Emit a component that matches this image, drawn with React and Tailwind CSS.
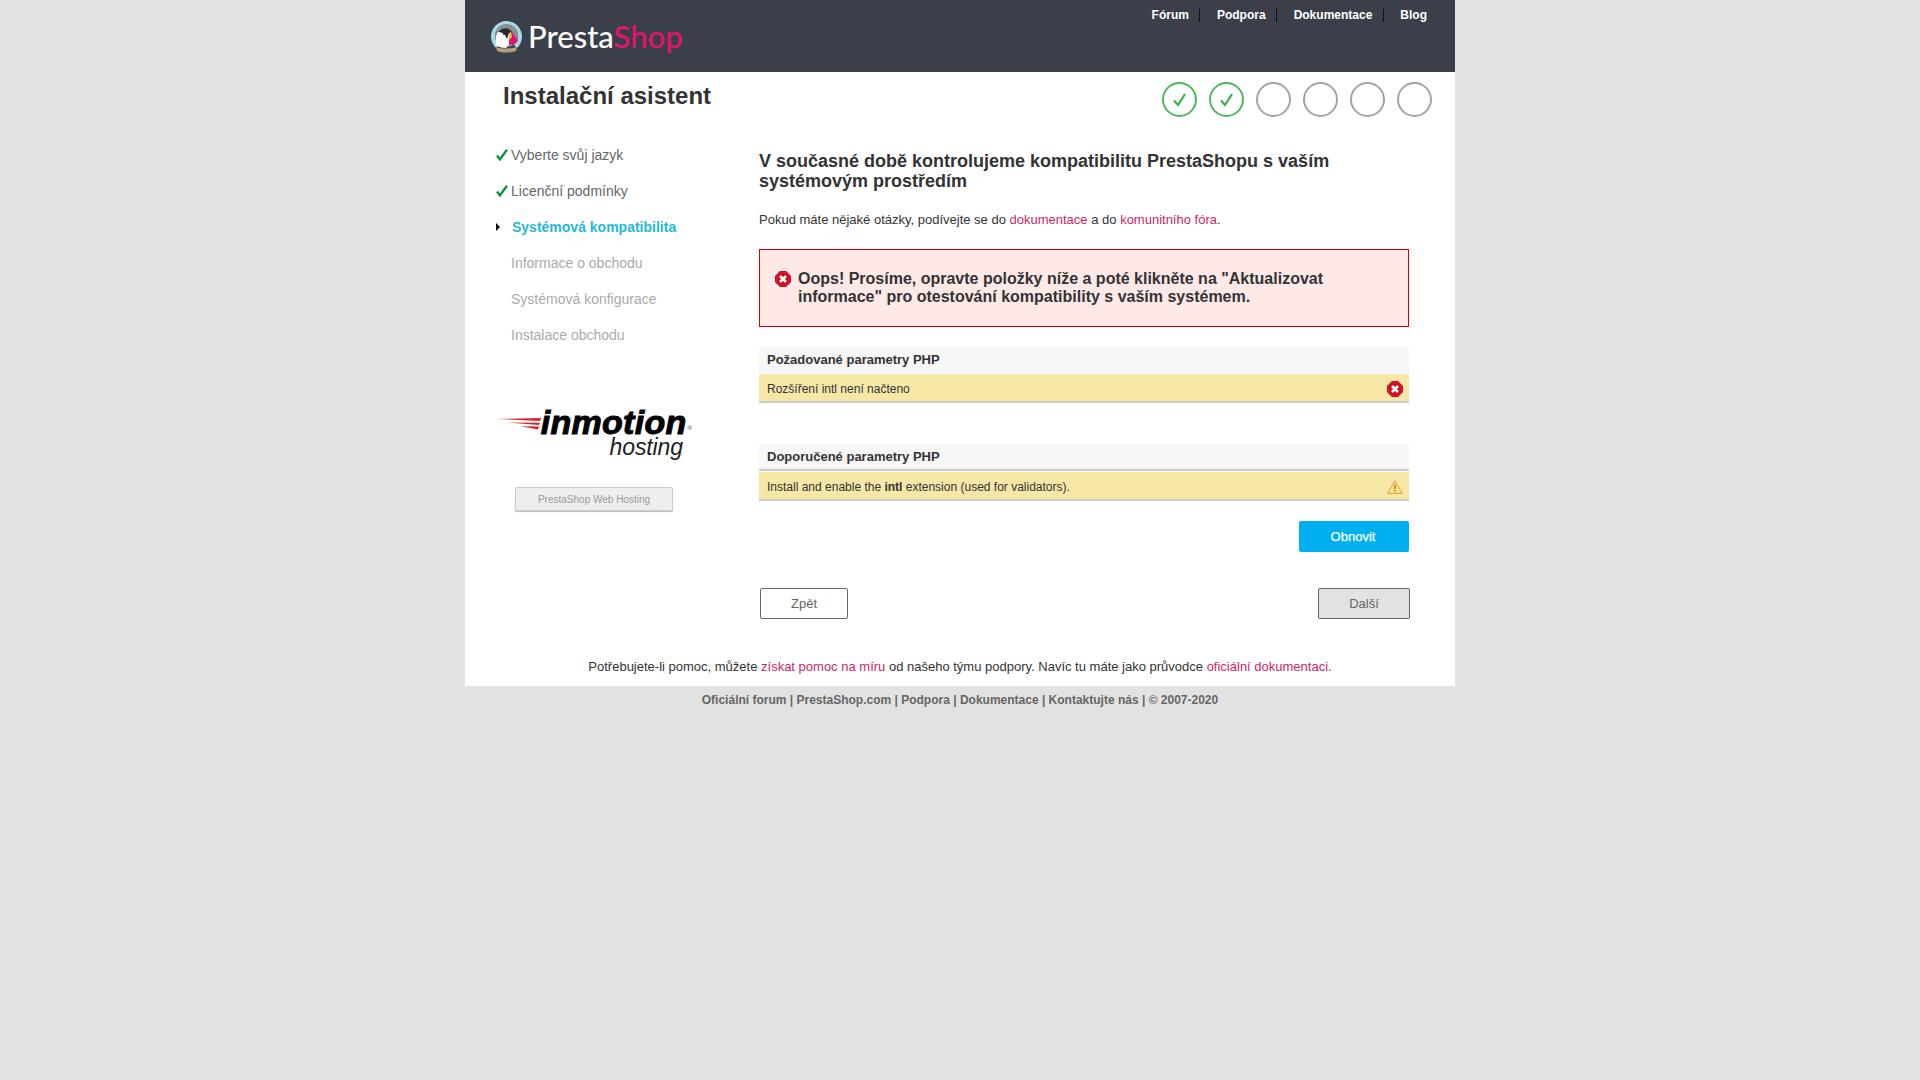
import React from 'react';

const sideItems = [
  { label: 'Vyberte svůj jazyk', state: 'done' },
  { label: 'Licenční podmínky', state: 'done' },
  { label: 'Systémová kompatibilita', state: 'active' },
  { label: 'Informace o obchodu', state: 'todo' },
  { label: 'Systémová konfigurace', state: 'todo' },
  { label: 'Instalace obchodu', state: 'todo' },
];

const navLinks = ['Fórum', 'Podpora', 'Dokumentace', 'Blog'];

function Puffin() {
  return (
    <svg width="33" height="33" viewBox="0 0 33 33" className="shrink-0">
      <path d="M6 28A15.5 15.5 0 1 1 27 28L24 25A11.5 11.5 0 1 0 9 25z" fill="#a5dbe8" />
      <circle cx="16.5" cy="15.5" r="11.5" fill="#8b9094" />
      <path d="M6 25c-1-6 0-12 4-15 3-2 7-2 9 0l2 5-1 8-4 5c-4 0-8-1-10-3z" fill="#fff" />
      <path d="M8 12c3-4 9-5 12-2l2 2-3 1-2 6-2-4c-2-2-4-3-7-3z" fill="#26292e" />
      <path d="M19 14l3-2 6 9-5 4-4-1z" fill="#e5126f" />
      <path d="M19 14l2-2 1 5-3 3z" fill="#f2c230" />
      <circle cx="14" cy="14" r="1" fill="#26292e" />
      <path d="M6 27c6 2 15 2 21 0l-1 4c-5 2-14 2-19 0z" fill="#b79f7e" />
    </svg>
  );
}

function ErrorIcon({ className }) {
  return (
    <svg width="16" height="16" viewBox="0 0 16 16" className={className}>
      <path d="M5 0h6l5 5v6l-5 5H5l-5-5V5z" fill="#b30012" />
      <path d="M5.4 1.2h5.2l4.2 4.2v5.2l-4.2 4.2H5.4l-4.2-4.2V5.4z" fill="#d00a20" stroke="#e8505c" strokeWidth="0.6" />
      <path d="M5 5l6 6M11 5l-6 6" stroke="#fff" strokeWidth="2.6" />
    </svg>
  );
}

function WarningIcon() {
  return (
    <svg width="16" height="14" viewBox="0 0 16 14" className="shrink-0">
      <path d="M8 .8l7.4 12.6H.6z" fill="#fae58c" stroke="#e0a030" strokeWidth="1" />
      <path d="M8 4.5v4.5" stroke="#c87a10" strokeWidth="1.6" />
      <path d="M8 10v1.6" stroke="#c87a10" strokeWidth="1.6" />
    </svg>
  );
}

function SideCheck() {
  return (
    <svg width="12" height="12" viewBox="0 0 12 12" className="shrink-0 ml-[1px] -mt-[1px]">
      <path d="M1 6.6l2.9 3.8L11 .8" fill="none" stroke="#0b9444" strokeWidth="2.4" />
    </svg>
  );
}

function StepCircle({ done }) {
  return (
    <svg width="35" height="35" viewBox="0 0 35 35">
      <circle cx="17.5" cy="17.5" r="16.5" fill="none" stroke={done ? '#4fb85c' : '#a0a4ab'} strokeWidth="2" />
      {done && <path d="M12 18.5l4 4.5 7-11" fill="none" stroke="#3cb04e" strokeWidth="2.2" />}
    </svg>
  );
}

function InmotionLogo() {
  return (
    <div className="flex flex-col items-end w-[198px] -ml-[1px]">
      <div className="flex items-center h-[29px]">
        <svg width="44" height="12" viewBox="0 0 44 12" className="shrink-0 mt-[2px]">
          <path d="M0 1l44-1-1 3z" fill="#d2232a" />
          <path d="M10 4.5l33 .2-1 2.3z" fill="#d2232a" />
          <path d="M24 8.2l18 .3-1 3z" fill="#d2232a" />
        </svg>
        <span className="text-[34px] leading-[29px] font-bold italic text-black tracking-[0.3px] [-webkit-text-stroke:1px_black]">inmotion</span>
        <span className="self-end mb-[6px] ml-px text-[6px] leading-none text-[#333]">®</span>
      </div>
      <span className="text-[23px] leading-[20px] italic text-[#222] pr-[9px] tracking-[-0.1px]">hosting</span>
    </div>
  );
}

export default function App() {
  return (
    <div className="min-h-screen bg-[#e1e3e2] font-['Liberation_Sans',Arial,sans-serif] text-[#333]">
      <div className="w-[990px] bg-white h-[686px] ml-[465px]">
        <header className="h-[72px] bg-[#3a3f4a] flex justify-between pl-[25px] pr-[28px]">
          <div className="flex items-center gap-[5px] h-[72px]">
            <Puffin />
            <span className="text-[31px] leading-none font-medium font-['Lato',sans-serif] text-white">
              Presta<span className="text-[#e5126f]">Shop</span>
            </span>
          </div>
          <nav className="flex items-start pt-[7px]">
            {navLinks.map((link, i) => (
              <div key={link} className="flex items-center">
                {i > 0 && <span className={`w-px h-[13px] bg-[#111] mt-px ${i === 3 ? 'ml-[11px] mr-[9px]' : 'mx-[10px]'}`} />}
                <a className={`text-[12px] leading-[16px] font-bold text-white ${i > 0 ? 'ml-[7px]' : ''}`}>{link}</a>
              </div>
            ))}
          </nav>
        </header>

        <div className="flex justify-between h-[62px] pl-[38px] pr-[23px]">
          <h1 className="text-[24px] leading-[28px] font-bold mt-[10px]">Instalační asistent</h1>
          <div className="flex gap-[12px] mt-[10px] h-[35px]">
            {[true, true, false, false, false, false].map((done, i) => (
              <StepCircle key={i} done={done} />
            ))}
          </div>
        </div>

        <div className="flex">
          <aside className="w-[294px] shrink-0 pl-[30px]">
            <ul className="flex flex-col mt-[3px]">
              {sideItems.map((item) => (
                <li key={item.label} className="h-[36px] flex items-center">
                  <span className="w-[16px] flex items-center">
                    {item.state === 'done' && <SideCheck />}
                    {item.state === 'active' && <span className="ml-[1px] border-y-[4px] border-l-[4px] border-y-transparent border-l-black" />}
                  </span>
                  <span
                    className={
                      item.state === 'done'
                        ? 'text-[14px] text-[#666]'
                        : item.state === 'active'
                          ? 'text-[14px] font-bold text-[#25b9d7] ml-px'
                          : 'text-[14px] text-[#aaa]'
                    }
                  >
                    {item.label}
                  </span>
                </li>
              ))}
            </ul>
            <div className="mt-[55px]">
              <InmotionLogo />
            </div>
            <div className="mt-[30px] ml-[20px] w-[158px] h-[24px] flex items-center justify-center rounded-[2px] bg-[#eee] border border-[#ccc] shadow-[0_1px_1px_#bbb] text-[10px] text-[#999]">
              PrestaShop Web Hosting
            </div>
          </aside>

          <main className="w-[650px] pt-[17px]">
            <h2 className="text-[18px] leading-[20px] font-bold">V současné době kontrolujeme kompatibilitu PrestaShopu s vaším systémovým prostředím</h2>
            <p className="text-[13px] leading-[16px] mt-[21px] text-[#333]">
              Pokud máte nějaké otázky, podívejte se do <a className="text-[#cf1f67]">dokumentace</a> a do <a className="text-[#cf1f67]">komunitního fóra</a>.
            </p>
            <div className="mt-[21px] h-[78px] border border-[#d40010] bg-[#ffe9e7] flex pt-[20px] pl-[15px] pr-[30px]">
              <ErrorIcon className="shrink-0 mt-[1px]" />
              <p className="ml-[7px] text-[16px] leading-[18px] font-bold">
                Oops! Prosíme, opravte položky níže a poté klikněte na "Aktualizovat informace" pro otestování kompatibility s vaším systémem.
              </p>
            </div>

            <div className="mt-[20px]">
              <div className="h-[27px] bg-[#f7f7f7] flex items-center px-[8px] pb-[2px] text-[13px] font-bold">Požadované parametry PHP</div>
              <div className="h-[29px] bg-[#f6e7a7] border-b-2 border-[#ccc] flex items-center justify-between pl-[8px] pr-[6px] pt-[2px] text-[12px]">
                <span>Rozšíření intl není načteno</span>
                <ErrorIcon className="shrink-0" />
              </div>
            </div>

            <div className="mt-[41px]">
              <div className="h-[27px] bg-[#f7f7f7] border-b-2 border-[#ccc] flex items-center px-[8px] text-[13px] font-bold">Doporučené parametry PHP</div>
              <div className="mt-px h-[29px] bg-[#f6e7a7] border-b-2 border-[#ccc] flex items-center justify-between pl-[8px] pr-[6px] pt-[2px] text-[12px]">
                <span>Install and enable the <b>intl</b> extension (used for validators).</span>
                <WarningIcon />
              </div>
            </div>

            <div className="flex justify-end mt-[20px]">
              <button className="w-[110px] h-[31px] rounded-[2px] bg-[#00aff0] text-white text-[13px] pr-[2px] pt-px [-webkit-text-stroke:0.25px_white]">Obnovit</button>
            </div>

            <div className="flex justify-between mt-[36px] -mr-px pl-px">
              <button className="w-[88px] h-[31px] rounded-[2px] border border-[#666] bg-white text-[#666] text-[13px] pt-px">Zpět</button>
              <button className="w-[92px] h-[31px] rounded-[2px] border border-[#666] bg-[#e2e2e2] text-[#666] text-[13px] pt-px">Další</button>
            </div>
          </main>
        </div>

        <p className="text-center text-[13px] leading-[16px] mt-[40px] text-[#333]">
          Potřebujete-li pomoc, můžete <a className="text-[#cf1f67]">získat pomoc na míru</a> od našeho týmu podpory. Navíc tu máte jako průvodce <a className="text-[#cf1f67]">oficiální dokumentaci</a>.
        </p>
      </div>

      <footer className="w-[990px] ml-[465px] text-center text-[12px] leading-[16px] font-bold text-[#666] pt-[6px]">
        Oficiální forum | PrestaShop.com | Podpora | Dokumentace | Kontaktujte nás | © 2007-2020
      </footer>
    </div>
  );
}
